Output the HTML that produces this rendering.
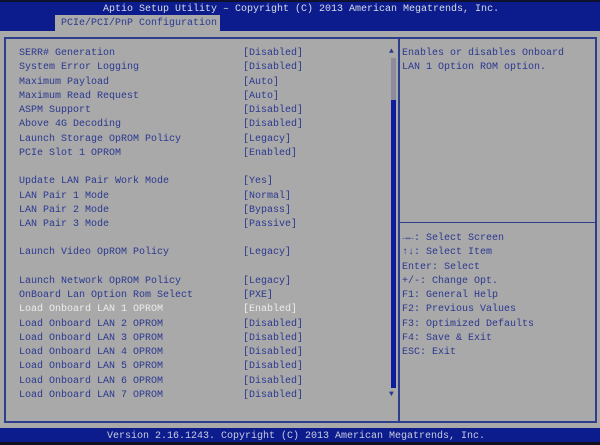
<!DOCTYPE html>
<html><head><meta charset="utf-8"><style>
*{margin:0;padding:0;box-sizing:border-box}
body{width:600px;height:445px;background:#a9a9a9;position:relative;overflow:hidden;font-family:"Liberation Mono",monospace;font-size:10px;color:#2b3890}
.t{position:absolute;white-space:pre;line-height:12px;z-index:5}
#top{position:absolute;left:0;top:0;width:600px;height:31px;background:#0c1c8c;border-top:2px solid #101030;z-index:1}
#tab{position:absolute;left:55px;top:15px;width:165px;height:17px;background:#a9a9a9;z-index:2}
#bot{position:absolute;left:0;top:428px;width:600px;height:17px;background:#0c1c8c;border-bottom:3px solid #101020}
.box{position:absolute;border:2px solid #2e3d8c}
.w{color:#ececec}
</style></head><body>
<div id="top"></div>
<div class="t" style="left:103px;top:4px;color:#d8dce8">Aptio Setup Utility – Copyright (C) 2013 American Megatrends, Inc.</div>
<div id="tab"></div>
<div class="t" style="left:61px;top:18px;color:#2b3890">PCIe/PCI/PnP Configuration</div>
<div class="box" style="left:4px;top:37px;width:396px;height:386px"></div>
<div class="box" style="left:398px;top:37px;width:199px;height:386px"></div>
<div style="position:absolute;left:400px;top:222px;width:195px;height:1px;background:#2e3d8c"></div>
<div style="position:absolute;left:391px;top:58px;width:5px;height:42px;background:#8c8c9c"></div>
<div style="position:absolute;left:391px;top:100px;width:5px;height:288px;background:#0c1c9c"></div>
<div class="t" style="left:389px;top:46px;font-size:8px">▲</div>
<div class="t" style="left:389px;top:389px;font-size:8px">▼</div>
<div id="bot"></div>
<div class="t" style="left:107px;top:431px;color:#c8cce0">Version 2.16.1243. Copyright (C) 2013 American Megatrends, Inc.</div>

<div class="t" style="left:19px;top:48px">SERR# Generation</div><div class="t" style="left:243px;top:48px">[Disabled]</div>
<div class="t" style="left:19px;top:62px">System Error Logging</div><div class="t" style="left:243px;top:62px">[Disabled]</div>
<div class="t" style="left:19px;top:77px">Maximum Payload</div><div class="t" style="left:243px;top:77px">[Auto]</div>
<div class="t" style="left:19px;top:91px">Maximum Read Request</div><div class="t" style="left:243px;top:91px">[Auto]</div>
<div class="t" style="left:19px;top:105px">ASPM Support</div><div class="t" style="left:243px;top:105px">[Disabled]</div>
<div class="t" style="left:19px;top:119px">Above 4G Decoding</div><div class="t" style="left:243px;top:119px">[Disabled]</div>
<div class="t" style="left:19px;top:134px">Launch Storage OpROM Policy</div><div class="t" style="left:243px;top:134px">[Legacy]</div>
<div class="t" style="left:19px;top:148px">PCIe Slot 1 OPROM</div><div class="t" style="left:243px;top:148px">[Enabled]</div>
<div class="t" style="left:19px;top:176px">Update LAN Pair Work Mode</div><div class="t" style="left:243px;top:176px">[Yes]</div>
<div class="t" style="left:19px;top:191px">LAN Pair 1 Mode</div><div class="t" style="left:243px;top:191px">[Normal]</div>
<div class="t" style="left:19px;top:205px">LAN Pair 2 Mode</div><div class="t" style="left:243px;top:205px">[Bypass]</div>
<div class="t" style="left:19px;top:219px">LAN Pair 3 Mode</div><div class="t" style="left:243px;top:219px">[Passive]</div>
<div class="t" style="left:19px;top:247px">Launch Video OpROM Policy</div><div class="t" style="left:243px;top:247px">[Legacy]</div>
<div class="t" style="left:19px;top:276px">Launch Network OpROM Policy</div><div class="t" style="left:243px;top:276px">[Legacy]</div>
<div class="t" style="left:19px;top:290px">OnBoard Lan Option Rom Select</div><div class="t" style="left:243px;top:290px">[PXE]</div>
<div class="t w" style="left:19px;top:304px">Load Onboard LAN 1 OPROM</div><div class="t w" style="left:243px;top:304px">[Enabled]</div>
<div class="t" style="left:19px;top:319px">Load Onboard LAN 2 OPROM</div><div class="t" style="left:243px;top:319px">[Disabled]</div>
<div class="t" style="left:19px;top:333px">Load Onboard LAN 3 OPROM</div><div class="t" style="left:243px;top:333px">[Disabled]</div>
<div class="t" style="left:19px;top:347px">Load Onboard LAN 4 OPROM</div><div class="t" style="left:243px;top:347px">[Disabled]</div>
<div class="t" style="left:19px;top:361px">Load Onboard LAN 5 OPROM</div><div class="t" style="left:243px;top:361px">[Disabled]</div>
<div class="t" style="left:19px;top:376px">Load Onboard LAN 6 OPROM</div><div class="t" style="left:243px;top:376px">[Disabled]</div>
<div class="t" style="left:19px;top:390px">Load Onboard LAN 7 OPROM</div><div class="t" style="left:243px;top:390px">[Disabled]</div>

<div class="t" style="left:402px;top:48px">Enables or disables Onboard</div>
<div class="t" style="left:402px;top:62px">LAN 1 Option ROM option.</div>
<div class="t" style="left:402px;top:233px">→←: Select Screen</div>
<div class="t" style="left:402px;top:247px">↑↓: Select Item</div>
<div class="t" style="left:402px;top:262px">Enter: Select</div>
<div class="t" style="left:402px;top:276px">+/-: Change Opt.</div>
<div class="t" style="left:402px;top:290px">F1: General Help</div>
<div class="t" style="left:402px;top:304px">F2: Previous Values</div>
<div class="t" style="left:402px;top:319px">F3: Optimized Defaults</div>
<div class="t" style="left:402px;top:333px">F4: Save &amp; Exit</div>
<div class="t" style="left:402px;top:347px">ESC: Exit</div>
</body></html>
